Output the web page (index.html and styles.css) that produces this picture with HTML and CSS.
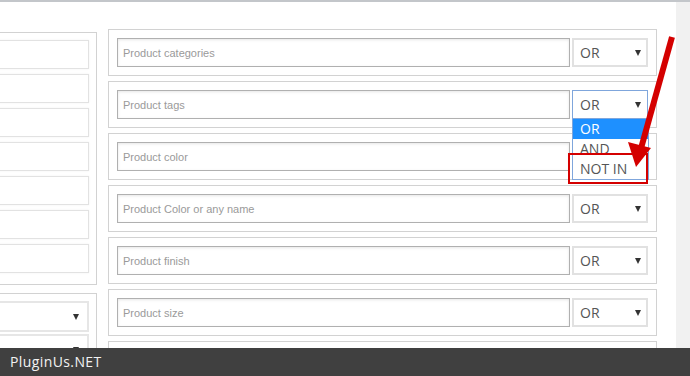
FILE: index.html
```html
<!DOCTYPE html>
<html lang="en">

<head>
    <meta charset="UTF-8">
    <title>Search filter logic</title>
    <link rel="stylesheet" href="styles.css">
</head>

<body>
    <div class="topline"></div>
    <div class="page">
        <div class="left">
            <div class="panel">
                <input class="plain" type="text">
                <input class="plain" type="text">
                <input class="plain" type="text">
                <input class="plain" type="text">
                <input class="plain" type="text">
                <input class="plain" type="text">
                <input class="plain" type="text">
            </div>
            <div class="panel lower">
                <div class="select plain-select"><span></span></div>
                <div class="select plain-select"><span></span></div>
            </div>
        </div>

        <div class="right">
            <div class="row">
                <input type="text" placeholder="Product categories">
                <div class="select"><span>OR</span></div>
            </div>
            <div class="row">
                <input type="text" placeholder="Product tags">
                <div class="select open"><span>OR</span>
                    <ul class="options">
                        <li class="active">OR</li>
                        <li>AND</li>
                        <li>NOT IN</li>
                    </ul>
                </div>
            </div>
            <div class="row">
                <input type="text" placeholder="Product color">
                <div class="select"><span>OR</span></div>
            </div>
            <div class="row">
                <input type="text" placeholder="Product Color or any name">
                <div class="select"><span>OR</span></div>
            </div>
            <div class="row">
                <input type="text" placeholder="Product finish">
                <div class="select"><span>OR</span></div>
            </div>
            <div class="row">
                <input type="text" placeholder="Product size">
                <div class="select"><span>OR</span></div>
            </div>
            <div class="row">
                <input type="text">
                <div class="select"><span>OR</span></div>
            </div>
        </div>

        <div class="strip"></div>
    </div>

    <!-- annotation on top of the screenshot -->
    <div class="highlight"></div>
    <svg class="arrow" width="690" height="376" viewBox="0 0 690 376">
        <line x1="672" y1="37" x2="640" y2="152" stroke="#d40000" stroke-width="6" />
        <polygon points="636,167 628,142 651,148" fill="#d40000" />
    </svg>

    <div class="footer">PluginUs.NET</div>
</body>

</html>
```

FILE: styles.css
```css
html,
body {
    margin: 0;
    height: 376px;
    overflow: hidden;
    background-color: #fff;
    font-family: "Open Sans", sans-serif;
}

.topline {
    height: 2px;
    background-color: #c3c6ca;
}

.page {
    display: flex;
    align-items: flex-start;
    height: 374px;
}

/* left column is cut off by the screenshot edge */
.left {
    width: 200px;
    margin-left: -103px;
    margin-top: 30px;
    flex-shrink: 0;
}

.panel {
    border: 1px solid #d2d2d2;
    padding: 7px 7px 11px 7px;
    display: flex;
    flex-direction: column;
    gap: 5px;
}

.panel.lower {
    margin-top: 8px;
    padding-bottom: 7px;
    gap: 2px;
}

input {
    box-sizing: border-box;
    height: 29px;
    margin: 0;
    border: 1px solid #b0b0b0;
    box-shadow: inset 0 1px 3px rgba(0, 0, 0, 0.1);
    padding: 0 5px;
    font-family: "Liberation Sans", Arial, sans-serif;
    font-size: 11px;
    color: #555;
    outline: none;
}

input::placeholder {
    color: #9a9a9a;
}

input.plain {
    border-color: #e2e2e2;
    box-shadow: 0 0 2px rgba(0, 0, 0, 0.06);
}

.right {
    width: 549px;
    margin-left: 11px;
    margin-top: 27px;
    flex-shrink: 0;
    display: flex;
    flex-direction: column;
    gap: 5px;
}

.row {
    box-sizing: border-box;
    height: 47px;
    border: 1px solid #d2d2d2;
    padding: 8px;
    display: flex;
    gap: 2px;
}

.row input {
    width: 453px;
}

.select {
    position: relative;
    box-sizing: border-box;
    width: 76px;
    height: 29px;
    border: 2px solid #e1e1e1;
    padding-left: 6px;
    font-size: 14px;
    line-height: 25px;
    color: #555;
}

.select::after {
    content: "";
    position: absolute;
    right: 5px;
    top: 10px;
    border-left: 3px solid transparent;
    border-right: 3px solid transparent;
    border-top: 6px solid #333;
}

.select.open {
    border: 1px solid #7fa6dc;
    padding-left: 7px;
    line-height: 27px;
}

.select.open::after {
    right: 6px;
    top: 11px;
}

.plain-select {
    width: auto;
    height: 31px;
    border-color: #e6e6e6;
}

.plain-select::after {
    top: 11px;
    right: 8px;
}

.options {
    position: absolute;
    left: -1px;
    top: 27px;
    width: 75px;
    margin: 0;
    padding: 0;
    list-style: none;
    background-color: #fff;
    border: 1px solid #7fa6dc;
    z-index: 2;
}

.options li {
    height: 20px;
    line-height: 20px;
    padding-left: 7px;
    color: #555;
}

.options li.active {
    background-color: #1e90ff;
    color: #fff;
}

.strip {
    width: 14px;
    height: 374px;
    margin-left: 19px;
    background-color: #f1f1f1;
}

.highlight {
    position: absolute;
    left: 568px;
    top: 153px;
    width: 76px;
    height: 27px;
    border: 2px solid #d40000;
    z-index: 3;
}

.arrow {
    position: absolute;
    left: 0;
    top: 0;
    pointer-events: none;
    z-index: 4;
}

.footer {
    position: fixed;
    left: 0;
    right: 0;
    bottom: 0;
    height: 28px;
    padding-left: 10px;
    background-color: #404040;
    color: #f2f2f2;
    font-size: 14px;
    line-height: 28px;
    letter-spacing: 0.4px;
    z-index: 5;
}
```
